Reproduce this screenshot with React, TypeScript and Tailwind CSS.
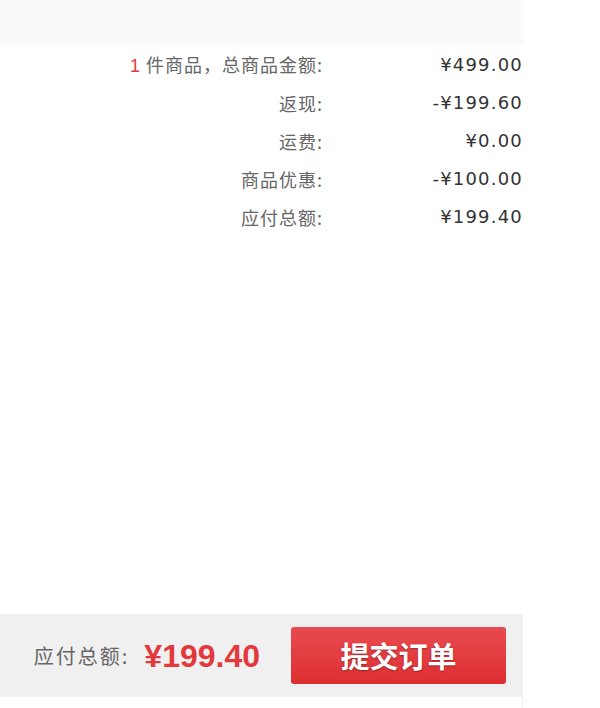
import React from 'react';

interface SummaryRow {
  label: React.ReactNode;
  value: string;
}

const rows: SummaryRow[] = [
  {
    label: (
      <>
        <span className="text-[#e4393c] font-['Liberation_Sans',sans-serif]">1</span> 件商品，总商品金额:
      </>
    ),
    value: '¥499.00',
  },
  { label: '返现:', value: '-¥199.60' },
  { label: '运费:', value: '¥0.00' },
  { label: '商品优惠:', value: '-¥100.00' },
  { label: '应付总额:', value: '¥199.40' },
];

export default function App() {
  return (
    <div className="w-[600px] h-[708px] bg-white flex flex-col font-['Noto_Sans_CJK_SC',sans-serif]">
      <div className="w-[523px] flex-1 flex flex-col">
        {/* Header band */}
        <div className="h-[44px] bg-[#fafafa]" />

        {/* Price summary */}
        <div className="pt-[2px]">
          {rows.map((row, i) => (
            <div key={i} className="flex items-center h-[38px]">
              <div className="flex-1 text-right text-[18px] tracking-[1px] text-[#666] leading-none">
                {row.label}
              </div>
              <div className="w-[200px] text-right text-[18px] tracking-[1.2px] text-[#333] leading-none font-['DejaVu_Sans',sans-serif]">
                {row.value}
              </div>
            </div>
          ))}
        </div>

        <div className="flex-1" />

        {/* Checkout bar */}
        <div className="h-[83px] bg-[#f0f0f0] flex items-center justify-end pr-[17px]">
          <span className="text-[20px] tracking-[2px] text-[#666] leading-none mr-[15px]">应付总额:</span>
          <span className="text-[32px] font-bold text-[#e4393c] leading-none font-['Liberation_Sans',sans-serif]">
            ¥199.40
          </span>
          <button
            type="button"
            className="ml-[31px] w-[215px] h-[57px] rounded-[3px] bg-gradient-to-b from-[#e84a4f] to-[#dd2e31] text-white text-[29px] font-bold leading-none [text-shadow:0_1px_2px_rgba(0,0,0,0.35)]"
          >
            提交订单
          </button>
        </div>
        <div className="h-[11px] border-r border-[#eee]" />
      </div>
    </div>
  );
}
